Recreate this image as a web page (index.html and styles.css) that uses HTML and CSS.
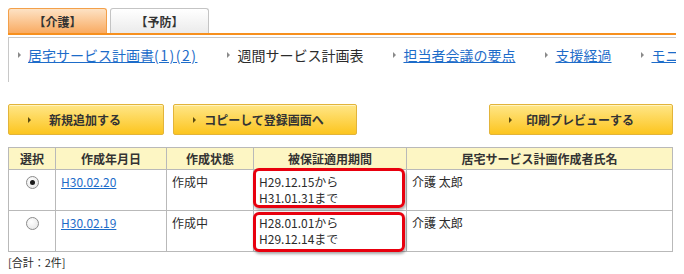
FILE: index.html
```html
<!DOCTYPE html>
<html lang="ja">
<head>
    <meta charset="UTF-8">
    <meta name="viewport" content="width=device-width, initial-scale=1.0">
    <title>居宅サービス計画</title>
    <link rel="stylesheet" href="styles.css">
</head>
<body>
    <div class="tabs">
        <div class="tab tab-on">【介護】</div>
        <div class="tab">【予防】</div>
    </div>
    <div class="subnav">
        <a class="nav-item" href="#"><span class="tri"></span><span class="nav-link">居宅サービス計画書<span class="num">(1)(2)</span></span></a>
        <span class="nav-item"><span class="tri"></span><span class="nav-current">週間サービス計画表</span></span>
        <a class="nav-item" href="#"><span class="tri"></span><span class="nav-link">担当者会議の要点</span></a>
        <a class="nav-item" href="#"><span class="tri"></span><span class="nav-link">支援経過</span></a>
        <a class="nav-item" href="#"><span class="tri"></span><span class="nav-link">モニタリング</span></a>
    </div>
    <div class="actions">
        <div class="btn btn-new"><span class="tri dark"></span><span class="btn-text">新規追加する</span></div>
        <div class="btn btn-wide"><span class="tri dark"></span><span class="btn-text">コピーして登録画面へ</span></div>
        <div class="btn btn-wide btn-print"><span class="tri dark"></span><span class="btn-text">印刷プレビューする</span></div>
    </div>
    <table class="plans">
        <colgroup>
            <col class="c-sel">
            <col class="c-date">
            <col class="c-state">
            <col class="c-period">
            <col class="c-name">
        </colgroup>
        <tr>
            <th>選択</th>
            <th>作成年月日</th>
            <th>作成状態</th>
            <th>被保証適用期間</th>
            <th>居宅サービス計画作成者氏名</th>
        </tr>
        <tr>
            <td class="sel"><span class="radio checked"></span></td>
            <td><a href="#">H30.02.20</a></td>
            <td>作成中</td>
            <td class="period">H29.12.15から<br>H31.01.31まで<span class="mark"></span></td>
            <td>介護 太郎</td>
        </tr>
        <tr>
            <td class="sel"><span class="radio"></span></td>
            <td><a href="#">H30.02.19</a></td>
            <td>作成中</td>
            <td class="period">H28.01.01から<br>H29.12.14まで<span class="mark mark-2"></span></td>
            <td>介護 太郎</td>
        </tr>
    </table>
    <p class="total">[合計：2件]</p>
</body>
</html>
```

FILE: styles.css
```css
html {
    overflow: hidden;
}
body {
    margin: 8px;
    font-family: "Noto Sans CJK JP", "Noto Sans", sans-serif;
    font-size: 12px;
    color: #2b2b2b;
    background: #fff;
}

/* tabs */
.tabs {
    display: flex;
    gap: 3px;
    width: 674px;
    border-bottom: 2px solid #f7901e;
}
.tab {
    width: 97px;
    height: 24px;
    line-height: 25px;
    text-align: center;
    font-weight: bold;
    font-size: 12px;
    color: #333;
    border: 1px solid #c4c4c4;
    border-bottom: none;
    border-radius: 3px 3px 0 0;
    background: linear-gradient(#ffffff, #ebebeb);
}
.tab-on {
    border-color: #f3a04a;
    background: linear-gradient(#fde2c4, #f9ab62);
}

/* sub navigation */
.subnav {
    display: flex;
    align-items: flex-start;
    gap: 30px;
    margin-top: 2px;
    width: 664px;
    height: 37px;
    padding: 7px 0 0 9px;
    border-top: 1px solid #c8c8c8;
    border-left: 1px solid #c8c8c8;
    overflow: hidden;
    white-space: nowrap;
    font-size: 14px;
    line-height: 20px;
}
.nav-item {
    display: flex;
    flex-shrink: 0;
    align-items: center;
    gap: 7px;
    text-decoration: none;
}
.nav-link {
    color: #1d6cc9;
    text-decoration: underline;
}
.num {
    letter-spacing: 1.5px;
}
.nav-current {
    color: #2b2b2b;
}
.tri {
    display: inline-block;
    width: 0;
    height: 0;
    border-left: 3px solid #8a8a8a;
    border-top: 3px solid transparent;
    border-bottom: 3px solid transparent;
}
.tri.dark {
    border-left-color: #5a4a10;
}

/* buttons */
.actions {
    display: flex;
    margin-top: 22px;
    width: 665px;
}
.btn {
    display: flex;
    align-items: center;
    box-sizing: border-box;
    height: 31px;
    padding: 0 24px 0 19px;
    border: 1px solid #e2b43a;
    border-radius: 2px;
    background: linear-gradient(#ffe687, #fcc51f);
    box-shadow: inset 0 1px 0 #fff3c0;
    font-weight: bold;
    font-size: 12px;
    color: #333;
}
.btn-new {
    width: 156px;
}
.btn-wide {
    width: 184px;
    margin-left: 9px;
}
.btn-print {
    margin-left: auto;
}
.btn-text {
    flex: 1;
    text-align: center;
}

/* table */
.plans {
    margin-top: 12px;
    width: 665px;
    border-collapse: collapse;
    table-layout: fixed;
}
.c-sel { width: 47px; }
.c-date { width: 111px; }
.c-state { width: 87px; }
.c-period { width: 153px; }
.plans th,
.plans td {
    border: 1px solid #b9b9b9;
    line-height: 16px;
}
.plans th {
    height: 21px;
    padding: 0;
    background: #fdf6c4;
    font-weight: bold;
    color: #333;
}
.plans td {
    padding: 4px 5px 4px;
    vertical-align: top;
}
.plans a {
    color: #1d6cc9;
}
.sel {
    text-align: center;
}
.radio {
    display: inline-block;
    box-sizing: border-box;
    width: 13px;
    height: 13px;
    margin-top: 2px;
    border: 1px solid #8c8c8c;
    border-radius: 50%;
    background: radial-gradient(circle at 40% 35%, #ffffff, #e2e2e2);
    position: relative;
}
.radio.checked::after {
    content: "";
    position: absolute;
    left: 3px;
    top: 3px;
    width: 5px;
    height: 5px;
    border-radius: 50%;
    background: #1a1a1a;
}
.period {
    position: relative;
}
.mark {
    position: absolute;
    left: -1px;
    top: -2px;
    width: 152px;
    height: 40px;
    box-sizing: border-box;
    border: 3px solid #e8000e;
    border-radius: 6px;
    box-shadow: 1px 2px 3px rgba(0, 0, 0, 0.35);
}
.mark-2 {
    top: 1px;
}
.total {
    margin: 3px 0 0;
    font-size: 11px;
    line-height: 14px;
}
```
